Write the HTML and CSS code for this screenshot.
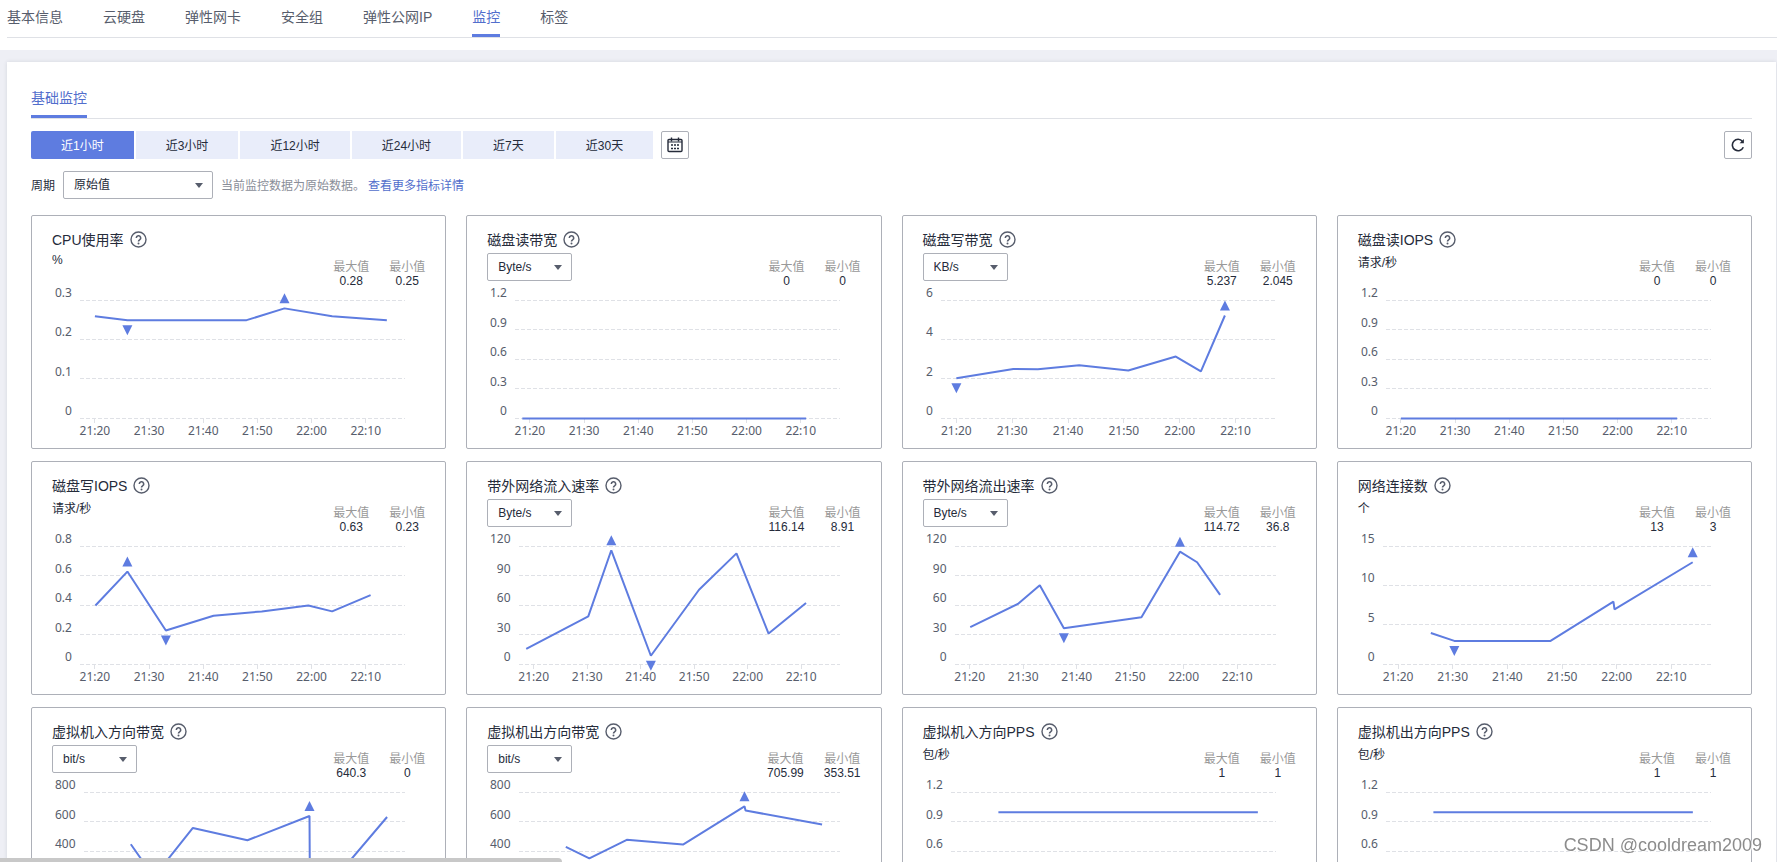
FILE: index.html
```html
<!DOCTYPE html>
<html lang="zh-CN">
<head>
<meta charset="utf-8">
<title>监控</title>
<link rel="stylesheet" href="styles.css">
</head>
<body>
<svg class="sprite" aria-hidden="true">
  <symbol id="i-help" viewBox="0 0 17 17">
    <circle cx="8.5" cy="8.5" r="7.5" fill="none" stroke="currentColor" stroke-width="1.4"/>
    <path d="M6.3 7a2.2 2.2 0 1 1 3.3 1.9c-.8.5-1.1.8-1.1 1.6" fill="none" stroke="currentColor" stroke-width="1.6"/>
    <circle cx="8.5" cy="12.4" r="1" fill="currentColor"/>
  </symbol>
</svg>

<nav class="tabs" aria-label="实例">
  <a class="tab" href="#info">基本信息</a>
  <a class="tab" href="#disk">云硬盘</a>
  <a class="tab" href="#nic">弹性网卡</a>
  <a class="tab" href="#sg">安全组</a>
  <a class="tab" href="#eip">弹性公网IP</a>
  <a class="tab tab-on" href="#monitor" aria-current="page">监控</a>
  <a class="tab" href="#tags">标签</a>
</nav>

<main class="page">
  <section class="panel">
    <div class="subtabs"><a class="subtab" href="#basic">基础监控</a></div>

    <div class="toolbar">
      <div class="ranges">
        <button class="range range-on" type="button">近1小时</button>
        <button class="range" type="button">近3小时</button>
        <button class="range" type="button">近12小时</button>
        <button class="range" type="button">近24小时</button>
        <button class="range" type="button">近7天</button>
        <button class="range" type="button">近30天</button>
      </div>
      <button class="icon-btn" type="button" aria-label="自定义时间">
        <svg width="16" height="16" viewBox="0 0 16 16" fill="none" stroke="currentColor">
          <rect x="1" y="2.5" width="14" height="12" rx="1" stroke-width="1.4"/>
          <path d="M4.5 .5v4M11.500 .5v4" stroke-width="1.4"/>
          <path d="M1 5h14" stroke-width="1"/>
          <path d="M4 8h2M7 8h2M10 8h2M4 11.500h2M7 11.500h2M10 11.500h2" stroke-width="1.6"/>
        </svg>
      </button>
      <button class="icon-btn icon-btn-end" type="button" aria-label="刷新">
        <svg width="14" height="14" viewBox="0 0 14 14" fill="none" stroke="currentColor">
          <path d="M12.300 9.300A5.700 5.700 0 1 1 11.500 3.400" stroke-width="1.6"/>
          <path d="M12.900 .9v4.300H8.600z" fill="currentColor" stroke="none"/>
        </svg>
      </button>
    </div>

    <div class="period">
      <label for="period">周期</label>
      <span class="select select-wide"><select id="period"><option>原始值</option></select></span>
      <span class="note">当前监控数据为原始数据。</span>
      <a class="link" href="#metrics">查看更多指标详情</a>
    </div>

    <div class="grid">
      <article class="card">
        <h2 class="title">CPU使用率<svg class="help"><use href="#i-help"/></svg></h2>
        <div class="head"><span class="unit">%</span>
          <dl class="stats"><div><dt>最大值</dt><dd>0.28</dd></div><div><dt>最小值</dt><dd>0.25</dd></div></dl></div>
        <svg class="chart" data-chart="cpu"></svg>
      </article>
      <article class="card">
        <h2 class="title">磁盘读带宽<svg class="help"><use href="#i-help"/></svg></h2>
        <div class="head"><span class="select"><select aria-label="磁盘读带宽单位"><option>Byte/s</option></select></span>
          <dl class="stats"><div><dt>最大值</dt><dd>0</dd></div><div><dt>最小值</dt><dd>0</dd></div></dl></div>
        <svg class="chart" data-chart="diskReadBw"></svg>
      </article>
      <article class="card">
        <h2 class="title">磁盘写带宽<svg class="help"><use href="#i-help"/></svg></h2>
        <div class="head"><span class="select"><select aria-label="磁盘写带宽单位"><option>KB/s</option></select></span>
          <dl class="stats"><div><dt>最大值</dt><dd>5.237</dd></div><div><dt>最小值</dt><dd>2.045</dd></div></dl></div>
        <svg class="chart" data-chart="diskWriteBw"></svg>
      </article>
      <article class="card">
        <h2 class="title">磁盘读IOPS<svg class="help"><use href="#i-help"/></svg></h2>
        <div class="head"><span class="unit">请求/秒</span>
          <dl class="stats"><div><dt>最大值</dt><dd>0</dd></div><div><dt>最小值</dt><dd>0</dd></div></dl></div>
        <svg class="chart" data-chart="diskReadIops"></svg>
      </article>
      <article class="card">
        <h2 class="title">磁盘写IOPS<svg class="help"><use href="#i-help"/></svg></h2>
        <div class="head"><span class="unit">请求/秒</span>
          <dl class="stats"><div><dt>最大值</dt><dd>0.63</dd></div><div><dt>最小值</dt><dd>0.23</dd></div></dl></div>
        <svg class="chart" data-chart="diskWriteIops"></svg>
      </article>
      <article class="card">
        <h2 class="title">带外网络流入速率<svg class="help"><use href="#i-help"/></svg></h2>
        <div class="head"><span class="select"><select aria-label="带外网络流入速率单位"><option>Byte/s</option></select></span>
          <dl class="stats"><div><dt>最大值</dt><dd>116.14</dd></div><div><dt>最小值</dt><dd>8.91</dd></div></dl></div>
        <svg class="chart" data-chart="netIn"></svg>
      </article>
      <article class="card">
        <h2 class="title">带外网络流出速率<svg class="help"><use href="#i-help"/></svg></h2>
        <div class="head"><span class="select"><select aria-label="带外网络流出速率单位"><option>Byte/s</option></select></span>
          <dl class="stats"><div><dt>最大值</dt><dd>114.72</dd></div><div><dt>最小值</dt><dd>36.8</dd></div></dl></div>
        <svg class="chart" data-chart="netOut"></svg>
      </article>
      <article class="card">
        <h2 class="title">网络连接数<svg class="help"><use href="#i-help"/></svg></h2>
        <div class="head"><span class="unit">个</span>
          <dl class="stats"><div><dt>最大值</dt><dd>13</dd></div><div><dt>最小值</dt><dd>3</dd></div></dl></div>
        <svg class="chart" data-chart="conns"></svg>
      </article>
      <article class="card">
        <h2 class="title">虚拟机入方向带宽<svg class="help"><use href="#i-help"/></svg></h2>
        <div class="head"><span class="select"><select aria-label="虚拟机入方向带宽单位"><option>bit/s</option></select></span>
          <dl class="stats"><div><dt>最大值</dt><dd>640.3</dd></div><div><dt>最小值</dt><dd>0</dd></div></dl></div>
        <svg class="chart" data-chart="vmInBw"></svg>
      </article>
      <article class="card">
        <h2 class="title">虚拟机出方向带宽<svg class="help"><use href="#i-help"/></svg></h2>
        <div class="head"><span class="select"><select aria-label="虚拟机出方向带宽单位"><option>bit/s</option></select></span>
          <dl class="stats"><div><dt>最大值</dt><dd>705.99</dd></div><div><dt>最小值</dt><dd>353.51</dd></div></dl></div>
        <svg class="chart" data-chart="vmOutBw"></svg>
      </article>
      <article class="card">
        <h2 class="title">虚拟机入方向PPS<svg class="help"><use href="#i-help"/></svg></h2>
        <div class="head"><span class="unit">包/秒</span>
          <dl class="stats"><div><dt>最大值</dt><dd>1</dd></div><div><dt>最小值</dt><dd>1</dd></div></dl></div>
        <svg class="chart" data-chart="vmInPps"></svg>
      </article>
      <article class="card">
        <h2 class="title">虚拟机出方向PPS<svg class="help"><use href="#i-help"/></svg></h2>
        <div class="head"><span class="unit">包/秒</span>
          <dl class="stats"><div><dt>最大值</dt><dd>1</dd></div><div><dt>最小值</dt><dd>1</dd></div></dl></div>
        <svg class="chart" data-chart="vmOutPps"></svg>
      </article>
    </div>
  </section>
</main>
<div class="hscroll"></div>
<div class="watermark">CSDN @cooldream2009</div>
<script src="charts.js"></script>
</body>
</html>
```
FILE: styles.css
```css
* { box-sizing: border-box; }

html, body { height: 100%; }

body {
  margin: 0;
  overflow: hidden;
  background: #fff;
  color: #252b3a;
  font: 12px "Liberation Sans", "Noto Sans CJK SC", sans-serif;
}

button, select { font: inherit; color: inherit; }
a { text-decoration: none; }

.sprite { position: absolute; width: 0; height: 0; }

.tabs {
  display: flex;
  gap: 40px;
  margin: 0 0 12px 7px;
  border-bottom: 1px solid #dfe1e6;
}
.tab {
  height: 37px;
  border-bottom: 3px solid transparent;
  color: #575d6c;
  font-size: 14px;
  line-height: 34px;
}
.tab-on { color: #526ecc; border-bottom-color: #5e7ce0; }

.page {
  padding: 12px 1px 0 7px;
  background: #eeeff5;
}
.panel {
  padding: 22px 24px 24px;
  background: #fff;
  box-shadow: 0 0 4px rgba(37, 43, 58, 0.12);
}

.subtabs { display: flex; border-bottom: 1px solid #dfe1e6; }
.subtab {
  height: 34px;
  border-bottom: 3px solid #5e7ce0;
  color: #526ecc;
  font-size: 14px;
  line-height: 28px;
}

.toolbar { display: flex; gap: 8px; margin-top: 12px; }
.ranges { display: flex; gap: 2px; }
.range {
  height: 28px;
  padding: 0 30px 2px;
  border: 0;
  background: #e9edfa;
  white-space: nowrap;
}
.range-on { background: #5e7ce0; color: #fff; border-radius: 2px 0 0 2px; }
.icon-btn {
  display: flex;
  align-items: center;
  justify-content: center;
  width: 28px;
  height: 28px;
  padding: 0;
  border: 1px solid #adb0b8;
  border-radius: 2px;
  background: #fff;
}
.icon-btn-end { margin-left: auto; }

.period { display: flex; align-items: center; margin-top: 12px; }
.period label, .note, .link { padding-bottom: 2px; }
.note { margin-left: 8px; color: #8a8e99; }
.link { margin-left: 3px; color: #526ecc; }

.select { position: relative; display: block; width: 85px; height: 28px; }
.select-wide { width: 150px; margin-left: 8px; }
.select select {
  appearance: none;
  width: 100%;
  height: 100%;
  padding: 0 10px;
  border: 1px solid #adb0b8;
  border-radius: 2px;
  background: #fff;
}
.select::after {
  content: "";
  position: absolute;
  top: 12px;
  right: 10px;
  border: solid transparent;
  border-width: 5px 4px 0;
  border-top-color: #575d6c;
  pointer-events: none;
}

.grid {
  display: grid;
  grid-template-columns: repeat(4, minmax(0, 1fr));
  gap: 12px 20px;
  margin-top: 16px;
}
.card {
  padding: 13px 20px 15px;
  border: 1px solid #adb0b8;
  border-radius: 2px;
}
.title {
  display: flex;
  align-items: center;
  gap: 6px;
  height: 20px;
  margin: 0 0 4px;
  font-size: 14px;
  font-weight: 400;
}
.help { width: 17px; height: 17px; color: #575d6c; }
.head {
  display: flex;
  justify-content: space-between;
  align-items: flex-start;
  height: 35px;
}
.stats {
  display: flex;
  gap: 20px;
  margin: 7px 0 0;
  line-height: 14px;
  text-align: center;
}
.stats dt { color: #999; }
.stats dd { margin: 0; }

.chart { display: block; width: 100%; height: 145px; overflow: visible; }
.chart text { fill: #575d6c; font: 12px "Noto Sans", sans-serif; }
.gridline { stroke: #dfe1e6; stroke-dasharray: 4 2; shape-rendering: crispEdges; }
.tick { stroke: #dfe1e6; shape-rendering: crispEdges; }
.line { fill: none; stroke: #5e7ce0; stroke-width: 2; stroke-linejoin: bevel; }
.marker { fill: #5e7ce0; }

.hscroll {
  position: fixed;
  left: 0;
  bottom: 0;
  width: 562px;
  height: 4px;
  border-top-right-radius: 4px;
  background: #c8c8c8;
}
.watermark {
  position: fixed;
  right: 15px;
  bottom: 6px;
  color: #8c8c8c;
  font-size: 18px;
  text-shadow: 1px 1px 1px #fff;
}
```
FILE: charts.js
```js
// Points are [minutes after 21:20, value]; min and max are point indexes.
const charts = {
  cpu: { y: ["0", "0.1", "0.2", "0.3"], points: [[0, 0.26], [6, 0.25], [28, 0.25], [35, 0.28], [43.8, 0.26], [53.9, 0.25]], max: 3, min: 1 },
  diskReadBw: { y: ["0", "0.3", "0.6", "0.9", "1.2"], points: [[-1.4, 0], [51, 0]] },
  diskWriteBw: { y: ["0", "2", "4", "6"], points: [[0, 2.045], [10.2, 2.52], [14.6, 2.5], [22, 2.71], [30.8, 2.44], [39.3, 3.15], [43.8, 2.4], [48.1, 5.237]], max: 7, min: 0 },
  diskReadIops: { y: ["0", "0.3", "0.6", "0.9", "1.2"], points: [[0, 0], [51, 0]] },
  diskWriteIops: { y: ["0", "0.2", "0.4", "0.6", "0.8"], points: [[0.1, 0.4], [6, 0.63], [13.1, 0.23], [21.9, 0.33], [30.8, 0.36], [39.4, 0.4], [43.8, 0.36], [50.9, 0.47]], max: 1, min: 2 },
  netIn: { y: ["0", "30", "60", "90", "120"], points: [[-1.4, 16], [10.2, 49], [14.5, 116.14], [21.9, 8.91], [30.9, 76], [37.9, 113], [43.9, 31.5], [50.9, 62.6]], max: 2, min: 3 },
  netOut: { y: ["0", "30", "60", "90", "120"], points: [[0.1, 38], [9, 61.6], [13.1, 80.5], [17.6, 36.8], [32.1, 48], [39.3, 114.72], [42.5, 104], [46.8, 70.8]], max: 5, min: 3 },
  conns: { y: ["0", "5", "10", "15"], points: [[6, 4], [10.3, 3], [27.9, 3], [39.4, 8], [39.6, 7], [53.9, 13]], max: 5, min: 1 },
  vmInBw: { y: ["0", "200", "400", "600", "800"], points: [[6, 449], [10.3, 227], [17.6, 560], [27.8, 476], [39.4, 640.3], [39.5, 0], [44.1, 215], [53.9, 634]], max: 4, min: 5 },
  vmOutBw: { y: ["0", "200", "400", "600", "800"], points: [[6, 431], [10.4, 353.51], [17.4, 479], [27.9, 447], [39.4, 705.99], [39.6, 678], [53.9, 583]], max: 4, min: 1 },
  vmInPps: { y: ["0", "0.3", "0.6", "0.9", "1.2"], points: [[6, 1], [53.9, 1]] },
  vmOutPps: { y: ["0", "0.3", "0.6", "0.9", "1.2"], points: [[6, 1], [53.9, 1]] }
};

const times = ["21:20", "21:30", "21:40", "21:50", "22:00", "22:10"];
const SPAN = 60;
const START = -2.75;
const TOP = 12;
const PLOT = 118;

function add(svg, name, attrs, text) {
  const el = document.createElementNS("http://www.w3.org/2000/svg", name);
  for (const key in attrs) el.setAttribute(key, attrs[key]);
  if (text) el.textContent = text;
  svg.appendChild(el);
  return el;
}

function draw(svg) {
  const chart = charts[svg.dataset.chart];
  svg.replaceChildren();
  const right = Math.round(svg.clientWidth) - 20;
  const steps = chart.y.length - 1;
  const top = Number(chart.y[steps]);

  const labels = chart.y.map((text, i) => add(svg, "text", {
    y: Math.round(TOP + PLOT * (1 - i / steps)) - 3, "text-anchor": "end"
  }, text));
  const labelRight = 3 + Math.max(...labels.map(l => l.getComputedTextLength()));
  labels.forEach(l => l.setAttribute("x", labelRight));

  const left = Math.round(labelRight) + 8;
  const px = t => left + (t - START) / SPAN * (right - left);
  const py = v => TOP + 0.5 + PLOT * (1 - v / top);

  chart.y.forEach((_, i) => {
    const y = Math.floor(TOP + PLOT * (1 - i / steps)) + 0.5;
    add(svg, "line", { class: "gridline", x1: left, x2: right, y1: y, y2: y });
  });
  times.forEach((time, i) => {
    const x = Math.floor(px(i * 10)) + 0.5;
    add(svg, "line", { class: "tick", x1: x, x2: x, y1: TOP + PLOT, y2: TOP + PLOT + 5 });
    add(svg, "text", { x: px(i * 10), y: TOP + PLOT + 17, "text-anchor": "middle" }, time);
  });
  add(svg, "polyline", { class: "line", points: chart.points.map(([t, v]) => px(t) + "," + py(v)).join(" ") });

  [["max", -1], ["min", 1]].forEach(([key, dir]) => {
    if (chart[key] === undefined) return;
    const [t, v] = chart.points[chart[key]];
    const x = px(t);
    const base = py(v) + dir * 5;
    add(svg, "polygon", { class: "marker", points: `${x - 5},${base} ${x + 5},${base} ${x},${base + dir * 10}` });
  });
}

const drawAll = () => document.querySelectorAll(".chart").forEach(draw);
drawAll();
window.addEventListener("resize", drawAll);
```
